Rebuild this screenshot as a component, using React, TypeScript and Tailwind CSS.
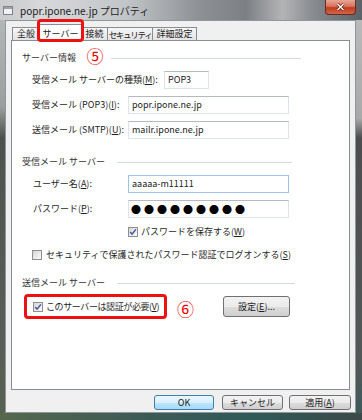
import React from 'react';

function CheckBox({ checked }: { checked?: boolean }) {
  return (
    <span className="w-[10px] h-[10px] shrink-0 border border-[#8e8f8f] bg-[linear-gradient(135deg,#d6d6d6,#fbfbfb)] flex items-center justify-center">
      {checked && (
        <svg width="8" height="8" viewBox="0 0 8 8">
          <path d="M1.2 4.1 L3.1 6.2 L6.9 1.4" stroke="#41569a" strokeWidth="1.5" fill="none" />
        </svg>
      )}
    </span>
  );
}

function Field({ value, width, focus }: { value: string; width: string; focus?: boolean }) {
  return (
    <div
      className={
        focus
          ? `${width} h-[18px] shrink-0 bg-white border border-[#9ec3e6] flex items-center pl-[3px] text-[9px] text-[#222]`
          : `${width} h-[18px] shrink-0 bg-white border border-[#dde3e9] border-t-[#b6b9bf] flex items-center pl-[3px] text-[9px] text-[#222]`
      }
    >
      {value}
    </div>
  );
}

function GroupTitle({ title, width }: { title: string; width: string }) {
  return (
    <div className={`${width} h-[18px] flex items-center pl-[10px] text-[9px] text-[#333]`}>
      <span className="shrink-0">{title}</span>
      <div className="flex-1 h-px bg-[#d4dbe0] ml-[12px]" />
    </div>
  );
}

function Btn({ label, width, def }: { label: string; width: string; def?: boolean }) {
  return (
    <button
      className={
        def
          ? `${width} h-[15px] rounded-[3px] border border-[#3c7fb1] bg-[linear-gradient(#eaf6fd_0%,#d9f0fc_50%,#bee6fd_50%,#a7d9f5_100%)] text-[9px] leading-none text-[#222] flex items-center justify-center`
          : `${width} h-[15px] rounded-[3px] border border-[#707070] bg-[linear-gradient(#f2f2f2_0%,#ebebeb_50%,#dddddd_50%,#cfcfcf_100%)] text-[9px] leading-none text-[#222] flex items-center justify-center`
      }
    >
      {label}
    </button>
  );
}

export default function App() {
  return (
    <div className="w-[362px] h-[420px] flex flex-col overflow-hidden whitespace-nowrap bg-[#4a5552] font-['Noto_Sans_CJK_JP','Noto_Sans',sans-serif] text-[#1e1e1e]">
      {/* Title bar */}
      <div className="h-[20px] shrink-0 relative flex items-center bg-[linear-gradient(to_right,#c9cbcd_0%,#d6d8da_12%,#c2c5c8_35%,#8d9195_55%,#7c8085_68%,#b3b4b5_78%,#8a8e92_86%,#5d6266_100%)]">
        <svg width="11" height="11" viewBox="0 0 11 11" className="ml-[3px] mt-[1px]">
          <rect x="0.5" y="1.5" width="9" height="8" fill="#eef0f2" stroke="#7d8389" />
          <rect x="1" y="2" width="8" height="2" fill="#9aa3ad" />
        </svg>
        <span className="ml-[6px] text-[10px] text-[#1c1c1c]">popr.ipone.ne.jp プロパティ</span>
        <div className="absolute right-[6px] top-0 w-[31px] h-[15px] rounded-b-[4px] border border-t-0 border-[#6b2a20] bg-[linear-gradient(#e8a696_0%,#d7735c_45%,#c23c1f_55%,#d0654a_100%)] flex items-center justify-center">
          <svg width="9" height="8" viewBox="0 0 9 8">
            <path d="M1.5 1 L7.5 7 M7.5 1 L1.5 7" stroke="#5b1a10" strokeWidth="2.6" />
            <path d="M1.5 1 L7.5 7 M7.5 1 L1.5 7" stroke="#ffffff" strokeWidth="1.4" />
          </svg>
        </div>
      </div>

      <div className="flex-1 flex">
        {/* left frame */}
        <div className="w-[5px] bg-[linear-gradient(#b4b5b6_0%,#9d9e9f_22%,#4f5150_30%,#5a5c5b_80%,#56624e_100%)]" />

        {/* client area */}
        <div className="w-[351px] bg-[#f0f0f0] border border-[#8f969c] flex flex-col">
          {/* tabs */}
          <div className="relative z-10 h-[17px] mt-[3px] -mb-px pl-[6px] flex items-start text-[9px] text-[#222]">
            <div className="w-[28px] h-[13px] mt-[3px] border border-b-0 border-[#898c95] bg-[linear-gradient(#f6f6f6,#e3e3e3)] flex items-center justify-center">全般</div>
            <div className="w-[43px] h-[17px] -ml-px border border-b-0 border-[#898c95] bg-white flex items-center justify-center pt-[1px]">サーバー</div>
            <div className="w-[27px] h-[13px] mt-[3px] -ml-px border border-b-0 border-[#898c95] bg-[linear-gradient(#f6f6f6,#e3e3e3)] flex items-center justify-center">接続</div>
            <div className="w-[46px] h-[13px] mt-[3px] -ml-px border border-b-0 border-[#898c95] bg-[linear-gradient(#f6f6f6,#e3e3e3)] flex items-center justify-center text-[8.5px] tracking-[-1.3px]">セキュリティ</div>
            <div className="w-[45px] h-[13px] mt-[3px] -ml-px border border-b-0 border-[#898c95] bg-[linear-gradient(#f6f6f6,#e3e3e3)] flex items-center justify-center">詳細設定</div>
            {/* annotation around the selected tab */}
            <div className="absolute left-[31px] -top-[5px] w-[47px] h-[23px] border-[3px] border-[#ee1111] rounded-[4px]" />
          </div>

          {/* tab page */}
          <div className="relative ml-[5px] w-[339px] h-[350px] bg-white border border-[#898c95] flex flex-col">
            <span className="absolute left-[67px] top-[4px] w-[32px] h-[20px] bg-white flex items-center justify-center text-[17px] leading-none text-[#e80000]">⑤</span>

            <div className="mt-[8px]">
              <GroupTitle title="サーバー情報" width="w-[289px]" />
            </div>

            <div className="mt-[4px] flex items-center pl-[20px] text-[9px]">
              <span className="w-[132px]">受信メール サーバーの種類(<u>M</u>):</span>
              <Field value="POP3" width="w-[45px]" />
            </div>
            <div className="mt-[7px] flex items-center pl-[20px] text-[9px]">
              <span className="w-[96px]">受信メール (POP3)(<u>I</u>):</span>
              <Field value="popr.ipone.ne.jp" width="w-[161px]" />
            </div>
            <div className="mt-[7px] flex items-center pl-[20px] text-[9px]">
              <span className="w-[96px]">送信メール (SMTP)(<u>U</u>):</span>
              <Field value="mailr.ipone.ne.jp" width="w-[161px]" />
            </div>

            <div className="mt-[14px]">
              <GroupTitle title="受信メール サーバー" width="w-[280px]" />
            </div>

            <div className="mt-[4px] flex items-center pl-[21px] text-[9px]">
              <span className="w-[95px]">ユーザー名(<u>A</u>):</span>
              <Field value="aaaaa-m11111" width="w-[161px]" focus />
            </div>
            <div className="mt-[7px] flex items-center pl-[21px] text-[9px]">
              <span className="w-[95px]">パスワード(<u>P</u>):</span>
              <div className="w-[161px] h-[18px] bg-white border border-[#dde3e9] border-t-[#b6b9bf] flex items-center pl-[2px] text-[10px] tracking-[3px] text-black">
                ●●●●●●●●●
              </div>
            </div>

            <div className="mt-[6px] h-[16px] flex items-center gap-[3px] pl-[116px] text-[9px]">
              <CheckBox checked />
              <span>パスワードを保存する(<u>W</u>)</span>
            </div>
            <div className="mt-[7px] h-[16px] flex items-center gap-[4px] pl-[20px] text-[9px]">
              <CheckBox />
              <span>セキュリティで保護されたパスワード認証でログオンする(<u>S</u>)</span>
            </div>

            <div className="mt-[11px]">
              <GroupTitle title="送信メール サーバー" width="w-[283px]" />
            </div>

            <div className="mt-[2px] flex items-center pl-[12px] text-[9px]">
              <div className="w-[143px] h-[25px] border-[3px] border-[#ee1111] rounded-[4px] flex items-center gap-[3px] pl-[6px]">
                <CheckBox checked />
                <span className="tracking-[-0.4px]">このサーバーは認証が必要(<u>V</u>)</span>
              </div>
              <span className="w-[56px] pl-[10px] pt-[3px] text-[17px] leading-none text-[#e80000]">⑥</span>
              <button className="w-[67px] h-[21px] rounded-[3px] border border-[#707070] bg-[linear-gradient(#f2f2f2_0%,#ebebeb_50%,#dddddd_50%,#cfcfcf_100%)] text-[9px] text-[#222] flex items-center justify-center">
                設定(<u>E</u>)...
              </button>
            </div>
          </div>

          {/* dialog buttons */}
          <div className="mt-[5px] flex items-center pl-[148px]">
            <Btn label="OK" width="w-[60px]" def />
            <div className="ml-[8px]">
              <Btn label="キャンセル" width="w-[61px]" />
            </div>
            <div className="ml-[6px]">
              <button className="w-[62px] h-[15px] rounded-[3px] border border-[#707070] bg-[linear-gradient(#f2f2f2_0%,#ebebeb_50%,#dddddd_50%,#cfcfcf_100%)] text-[9px] leading-none text-[#222] flex items-center justify-center">
                適用(<u>A</u>)
              </button>
            </div>
          </div>
        </div>

        {/* right frame */}
        <div className="w-[6px] bg-[linear-gradient(#b9b9b9_0%,#a9a9a9_25%,#4b4d4e_30%,#545757_85%,#3e5a5a_100%)]" />
      </div>

      {/* bottom frame */}
      <div className="h-[7px] shrink-0 bg-[linear-gradient(to_right,#55684e_0%,#3d5a55_40%,#2f5958_70%,#3b4a48_100%)]" />
    </div>
  );
}
